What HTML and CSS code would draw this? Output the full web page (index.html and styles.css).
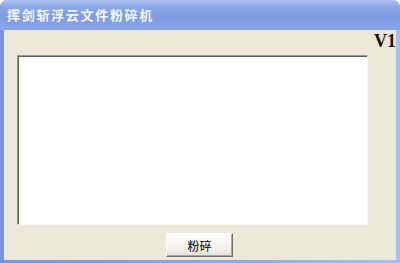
FILE: index.html
```html
<!DOCTYPE html>
<html lang="zh-CN">
<head>
    <meta charset="UTF-8">
    <title>挥剑斩浮云文件粉碎机</title>
    <link rel="stylesheet" href="styles.css">
</head>
<body>
    <div class="window">
        <div class="title-bar">挥剑斩浮云文件粉碎机</div>
        <div class="client">
            <div class="version">V1</div>
            <div class="drop-box"></div>
            <div class="actions">
                <button class="shred-btn">粉碎</button>
            </div>
        </div>
    </div>
</body>
</html>
```
FILE: styles.css
```css
body { margin: 0; font-family: "Noto Sans CJK SC", "DejaVu Sans", sans-serif; }
.window {
    width: 400px;
    height: 263px;
    box-sizing: border-box;
    border-radius: 7px 7px 0 0;
    padding: 0 4px 3px 4px;
    display: flex;
    flex-direction: column;
    background: linear-gradient(to right, #7894e0 0%, #8ea9e8 60%, #a9bff0 100%);
}
.title-bar {
    height: 30px;
    line-height: 29px;
    color: #f4f6fc;
    font-size: 13px;
    font-weight: bold;
    letter-spacing: 1.7px;
    background: linear-gradient(to bottom, #b0c5f2 0%, #8ea9e8 20%, #7f9be2 60%, #8ca7e8 100%);
    margin: 0 -4px;
    padding-left: 7px;
    border-radius: 7px 7px 0 0;
}
.client {
    flex: 1;
    background: #ece9d8;
    display: flex;
    flex-direction: column;
}
.version {
    font-family: "Liberation Serif", serif;
    font-weight: bold;
    font-size: 18px;
    color: #111;
    text-align: right;
    height: 25px;
    line-height: 18px;
    padding-top: 2px;
    box-sizing: border-box;
}
.drop-box {
    margin-left: 13px;
    width: 351px;
    height: 170px;
    box-sizing: border-box;
    background: #fff;
    border-top: 1px solid #9a988c;
    border-left: 1px solid #9a988c;
    border-right: 1px solid #f6f5ee;
    border-bottom: 1px solid #f6f5ee;
    box-shadow: inset 1px 1px 0 #5c5b55;
}
.actions {
    display: flex;
    justify-content: center;
    padding-top: 8px;
    padding-right: 1px;
}
.shred-btn {
    width: 67px;
    height: 24px;
    padding: 0;
    font-family: "Noto Sans CJK SC", sans-serif;
    font-size: 12px;
    color: #000;
    background: linear-gradient(to bottom, #fdfdfa 0%, #f2f1ea 70%, #e3e1d5 100%);
    border: 1px solid #fff;
    border-right-color: #716f64;
    border-bottom-color: #716f64;
    box-shadow: inset -1px -1px 0 #aca899;
}
```
